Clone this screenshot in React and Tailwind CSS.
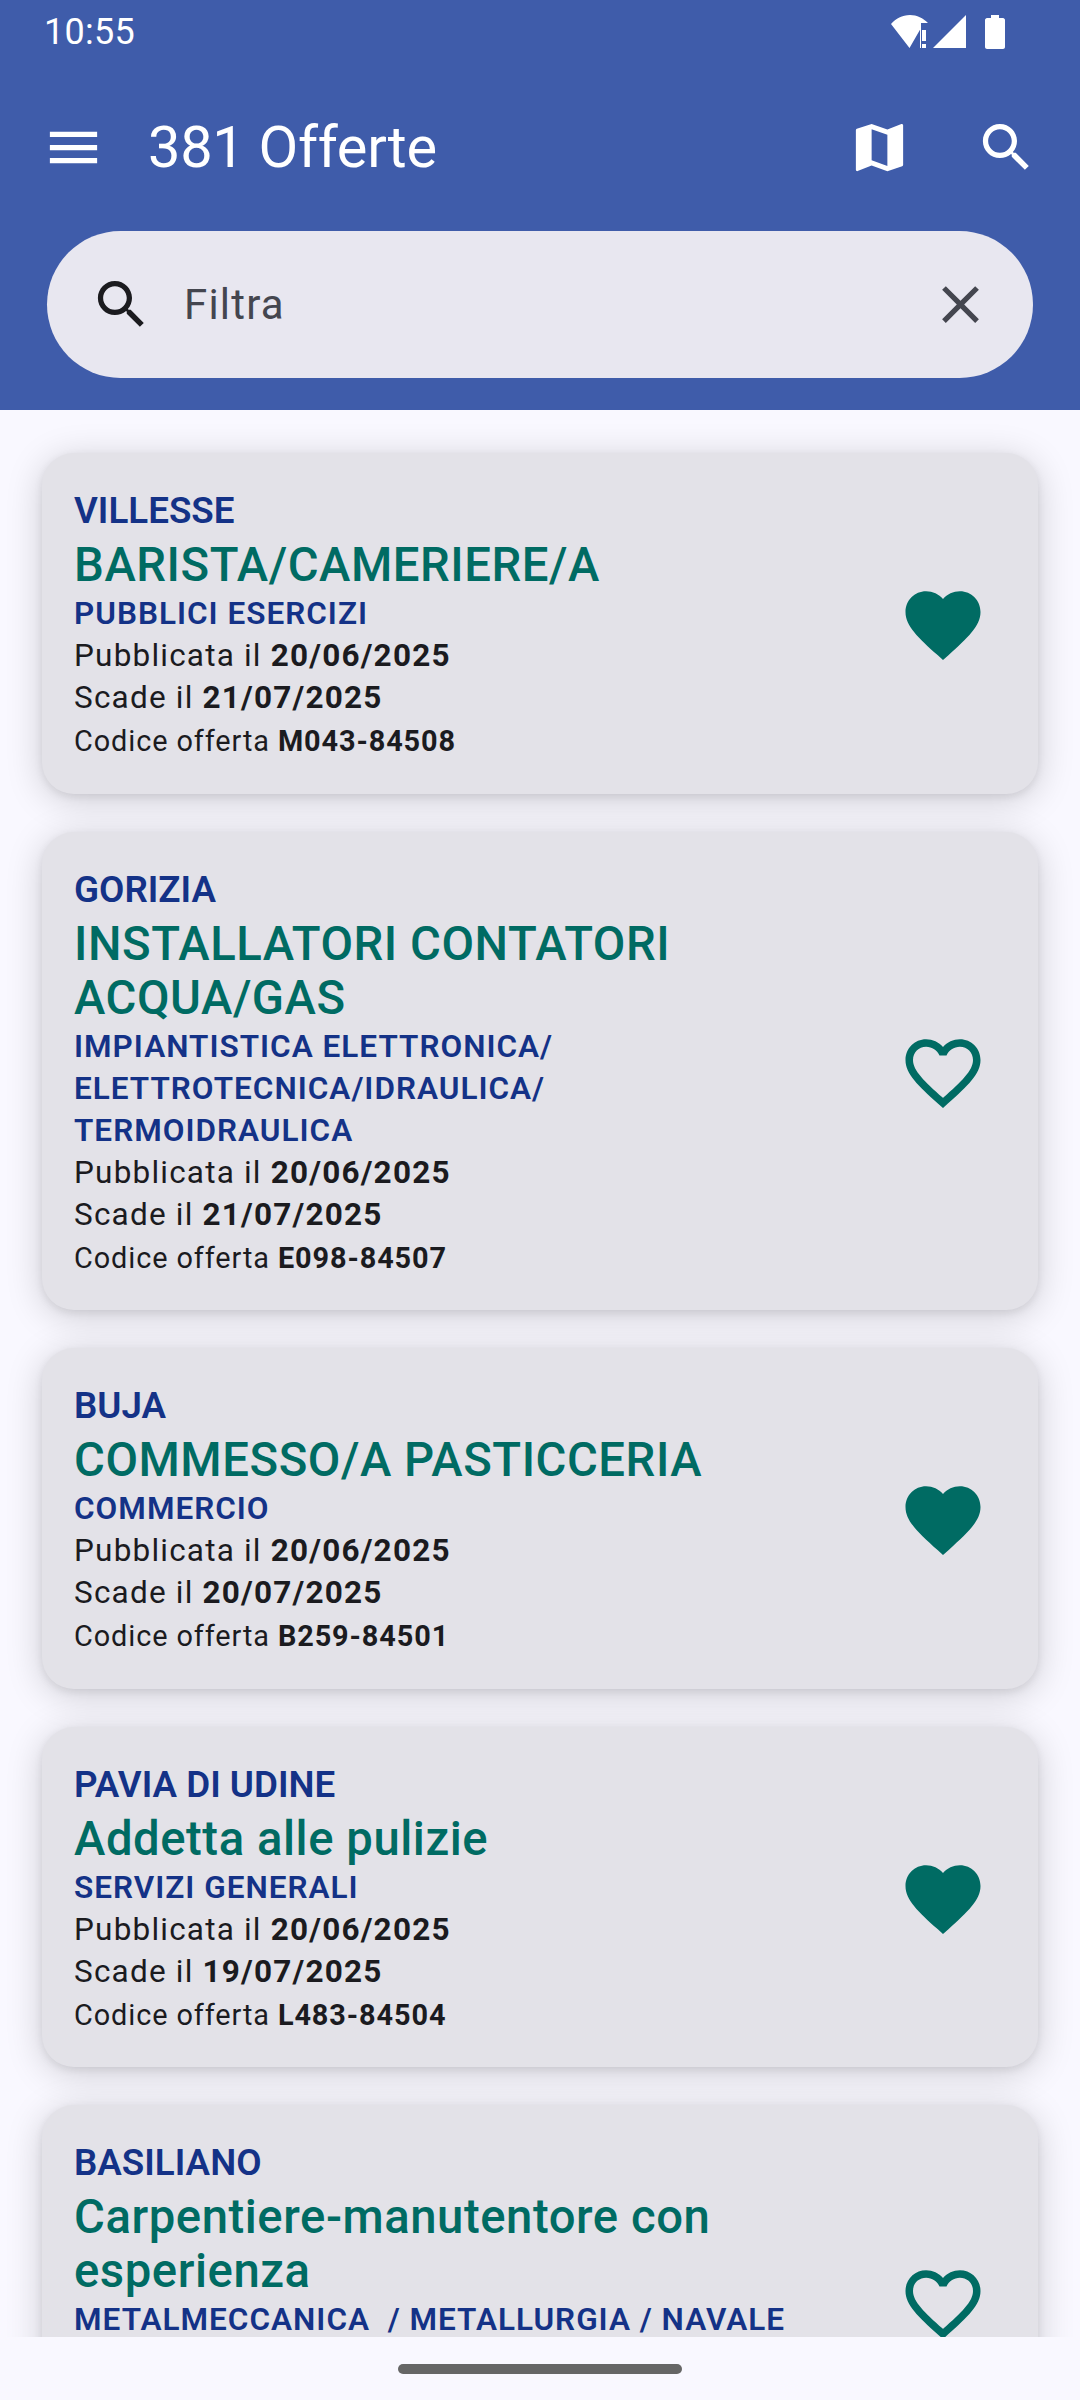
import React from 'react';

const Icon = ({ d, className }) => (
  <svg viewBox="0 0 24 24" className={className} fill="currentColor">
    <path d={d} />
  </svg>
);

const MENU = "M3 18h18v-2H3v2zm0-5h18v-2H3v2zm0-7v2h18V6H3z";
const MAP = "M20.5 3l-.16.03L15 5.1 9 3 3.36 4.9c-.21.07-.36.25-.36.48V20.5c0 .28.22.5.5.5l.16-.03L9 18.9l6 2.1 5.64-1.9c.21-.07.36-.25.36-.48V3.5c0-.28-.22-.5-.5-.5zM15 19l-6-2.11V5l6 2.11V19z";
const SEARCH = "M15.5 14h-.79l-.28-.27C15.41 12.59 16 11.11 16 9.5 16 5.91 13.09 3 9.5 3S3 5.91 3 9.5 5.91 16 9.5 16c1.61 0 3.09-.59 4.23-1.57l.27.28v.79l5 4.99L20.49 19l-4.99-5zm-6 0C7.01 14 5 11.99 5 9.5S7.01 5 9.5 5 14 7.01 14 9.5 11.99 14 9.5 14z";
const CLOSE = "M19 6.41L17.59 5 12 10.59 6.41 5 5 6.41 10.59 12 5 17.59 6.41 19 12 13.41 17.59 19 19 17.59 13.41 12z";
const HEART = "M12 21.35l-1.45-1.32C5.4 15.36 2 12.28 2 8.5 2 5.42 4.42 3 7.5 3c1.74 0 3.41.81 4.5 2.09C13.09 3.81 14.76 3 16.5 3 19.58 3 22 5.42 22 8.5c0 3.78-3.4 6.86-8.55 11.54L12 21.35z";
const HEART_OUTLINE = "M16.5 3c-1.74 0-3.41.81-4.5 2.09C10.91 3.81 9.24 3 7.5 3 4.42 3 2 5.42 2 8.5c0 3.78 3.4 6.86 8.55 11.54L12 21.35l1.45-1.32C18.6 15.36 22 12.28 22 8.5 22 5.42 19.58 3 16.5 3zm-4.4 15.55l-.1.1-.1-.1C7.14 14.24 4 11.39 4 8.5 4 6.5 5.5 5 7.5 5c1.54 0 3.04.99 3.57 2.36h1.87C13.46 5.99 14.96 5 16.5 5c2 0 3.5 1.5 3.5 3.5 0 2.89-3.14 5.74-7.9 10.05z";

const offers = [
  { city: "VILLESSE", title: "BARISTA/CAMERIERE/A", sector: "PUBBLICI ESERCIZI", pub: "20/06/2025", exp: "21/07/2025", code: "M043-84508", fav: true },
  { city: "GORIZIA", title: "INSTALLATORI CONTATORI ACQUA/GAS", sector: "IMPIANTISTICA ELETTRONICA/ ELETTROTECNICA/IDRAULICA/ TERMOIDRAULICA", pub: "20/06/2025", exp: "21/07/2025", code: "E098-84507", fav: false },
  { city: "BUJA", title: "COMMESSO/A PASTICCERIA", sector: "COMMERCIO", pub: "20/06/2025", exp: "20/07/2025", code: "B259-84501", fav: true },
  { city: "PAVIA DI UDINE", title: "Addetta alle pulizie", sector: "SERVIZI GENERALI", pub: "20/06/2025", exp: "19/07/2025", code: "L483-84504", fav: true },
  { city: "BASILIANO", title: "Carpentiere-manutentore con esperienza", sector: "METALMECCANICA  / METALLURGIA / NAVALE", pub: "20/06/2025", exp: "18/07/2025", code: "U205-84502", fav: false },
];

function StatusBar() {
  return (
    <div className="h-[63px] flex items-center justify-between pl-[44px] pr-[75px] text-white">
      <span className="text-[36px] leading-[62px] tracking-[0.3px]">10:55</span>
      <div className="flex items-center gap-[5px]">
        <svg viewBox="0 0 37 33" className="w-[37px] h-[33px]" fill="currentColor">
          <path d="M0 9C5 3.500 11 0 19 0C26 0 32 3 37 8H30V33H29V13H30L18.500 33Z" />
          <rect x="31" y="15" width="4" height="11" />
          <rect x="31" y="29" width="4" height="4" />
        </svg>
        <svg viewBox="0 0 33 33" className="w-[33px] h-[33px]" fill="currentColor">
          <path d="M33 0V33H0Z" />
        </svg>
        <svg viewBox="0 0 20 34" className="w-[20px] h-[34px] ml-[14px]" fill="currentColor">
          <path d="M6 0H14V3H18C19 3 20 4 20 5V32C20 33 19 34 18 34H2C1 34 0 33 0 32V5C0 4 1 3 2 3H6Z" />
        </svg>
      </div>
    </div>
  );
}

function OfferCard({ offer }) {
  return (
    <div className="flex items-center bg-[#e3e2e8] rounded-[32px] pl-[32px] pr-[50px] pt-[31px] pb-[31.5px] shadow-[0_3px_8px_rgba(0,0,0,0.08),0_6px_36px_rgba(0,0,0,0.18)]">
      <div className="flex-1 min-w-0 pr-[88px]">
        <div className="text-[#143287] text-[36.75px] leading-[54px] font-semibold">{offer.city}</div>
        <div className="text-[#006b63] text-[47.25px] leading-[54px] font-medium tracking-[0.55px]">{offer.title}</div>
        <div className="text-[#143287] text-[31.5px] leading-[42px] mt-[1px] font-semibold tracking-[1px] whitespace-pre-wrap">{offer.sector}</div>
        <div className="text-[#1b1b1f] text-[31.5px] leading-[42px] tracking-[1.2px]">
          Pubblicata il <span className="font-bold">{offer.pub}</span>
        </div>
        <div className="text-[#1b1b1f] text-[31.5px] leading-[42px] tracking-[1.2px]">
          Scade il <span className="font-bold">{offer.exp}</span>
        </div>
        <div className="text-[#1b1b1f] text-[28.875px] leading-[42px] mt-[1px] tracking-[0.9px]">
          Codice offerta <span className="font-bold">{offer.code}</span>
        </div>
      </div>
      <Icon d={offer.fav ? HEART : HEART_OUTLINE} className="w-[90px] h-[90px] mt-[4px] shrink-0 text-[#006b63]" />
    </div>
  );
}

export default function App() {
  return (
    <div className="w-[1080px] h-[2400px] flex flex-col overflow-hidden bg-[#f9f8ff] font-['Roboto',sans-serif]">
      <div className="bg-[#3f5caa] h-[410px] shrink-0">
        <StatusBar />
        <div className="h-[168px] flex items-center pl-[42px] pr-[42px] text-white">
          <Icon d={MENU} className="w-[63px] h-[63px]" />
          <span className="ml-[43px] flex-1 text-[57.75px] leading-[74px] tracking-[-0.3px]">381 Offerte</span>
          <Icon d={MAP} className="w-[63px] h-[63px]" />
          <Icon d={SEARCH} className="w-[63px] h-[63px] ml-[64px]" />
        </div>
        <div className="mx-[47px] h-[147px] rounded-full bg-[#e8e7f0] flex items-center pl-[43px] pr-[41px]">
          <Icon d={SEARCH} className="w-[63px] h-[63px] text-[#1b1b1f]" />
          <span className="ml-[31px] flex-1 text-[42px] leading-[56px] text-[#44464f] tracking-[1.2px]">Filtra</span>
          <Icon d={CLOSE} className="w-[63px] h-[63px] text-[#44464f]" />
        </div>
      </div>
      <div className="flex-1 min-h-0 overflow-hidden px-[42px] pt-[43px] flex flex-col gap-[38px]">
        {offers.map((o) => (
          <div key={o.code} className="shrink-0">
            <OfferCard offer={o} />
          </div>
        ))}
      </div>
      <div className="h-[63px] shrink-0 bg-[#f9f8ff] flex justify-center pt-[27px]">
        <div className="w-[284px] h-[10px] rounded-full bg-[#666666]" />
      </div>
    </div>
  );
}
